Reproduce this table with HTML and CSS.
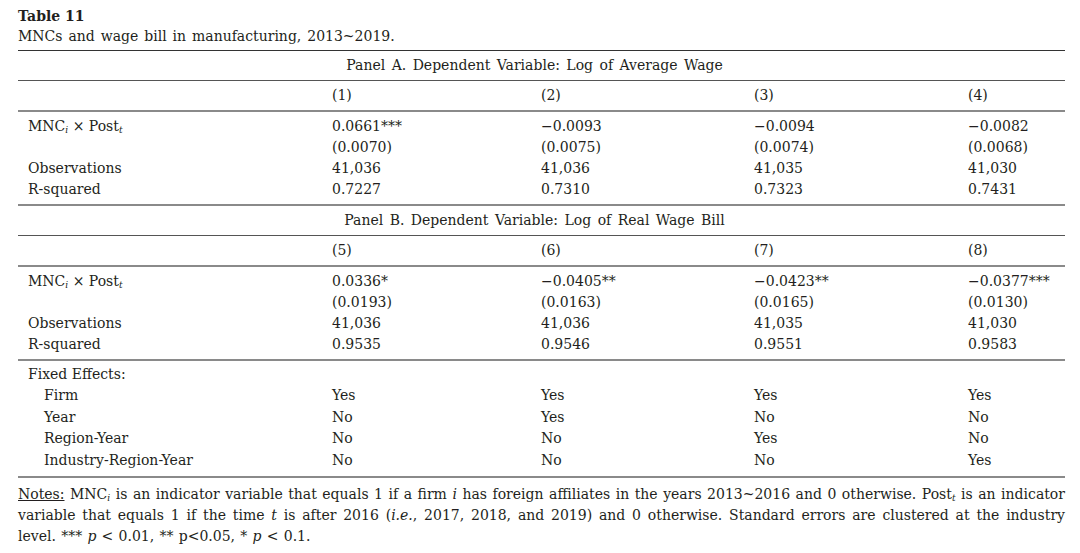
FILE: index.html
```html
<!DOCTYPE html>
<html lang="en">
<head>
<meta charset="utf-8">
<title>Table 11</title>
<link rel="stylesheet" href="styles.css">
</head>
<body>
<div class="page">
  <div class="title">Table 11</div>
  <div class="caption">MNCs and wage bill in manufacturing, 2013~2019.</div>
  <table class="tbl">
    <colgroup>
      <col class="c-label"><col class="c1"><col class="c2"><col class="c3"><col class="c4">
    </colgroup>
    <tbody>
      <tr class="panel first"><td colspan="5">Panel A. Dependent Variable: Log of Average Wage</td></tr>
      <tr class="colhead"><td></td><td>(1)</td><td>(2)</td><td>(3)</td><td>(4)</td></tr>
      <tr class="data top"><td class="lab">MNC<span class="sb">i</span> × Post<span class="sb">t</span></td><td>0.0661***</td><td>−0.0093</td><td>−0.0094</td><td>−0.0082</td></tr>
      <tr class="data"><td class="lab"></td><td>(0.0070)</td><td>(0.0075)</td><td>(0.0074)</td><td>(0.0068)</td></tr>
      <tr class="data"><td class="lab">Observations</td><td>41,036</td><td>41,036</td><td>41,035</td><td>41,030</td></tr>
      <tr class="data bottom"><td class="lab">R-squared</td><td>0.7227</td><td>0.7310</td><td>0.7323</td><td>0.7431</td></tr>
      <tr class="panel"><td colspan="5">Panel B. Dependent Variable: Log of Real Wage Bill</td></tr>
      <tr class="colhead"><td></td><td>(5)</td><td>(6)</td><td>(7)</td><td>(8)</td></tr>
      <tr class="data top"><td class="lab">MNC<span class="sb">i</span> × Post<span class="sb">t</span></td><td>0.0336*</td><td>−0.0405**</td><td>−0.0423**</td><td>−0.0377***</td></tr>
      <tr class="data"><td class="lab"></td><td>(0.0193)</td><td>(0.0163)</td><td>(0.0165)</td><td>(0.0130)</td></tr>
      <tr class="data"><td class="lab">Observations</td><td>41,036</td><td>41,036</td><td>41,035</td><td>41,030</td></tr>
      <tr class="data bottom"><td class="lab">R-squared</td><td>0.9535</td><td>0.9546</td><td>0.9551</td><td>0.9583</td></tr>
      <tr class="data top sep"><td class="lab">Fixed Effects:</td><td></td><td></td><td></td><td></td></tr>
      <tr class="data fe"><td class="lab sub">Firm</td><td>Yes</td><td>Yes</td><td>Yes</td><td>Yes</td></tr>
      <tr class="data fe"><td class="lab sub">Year</td><td>No</td><td>Yes</td><td>No</td><td>No</td></tr>
      <tr class="data fe"><td class="lab sub">Region-Year</td><td>No</td><td>No</td><td>Yes</td><td>No</td></tr>
      <tr class="data fe bottom last"><td class="lab sub">Industry-Region-Year</td><td>No</td><td>No</td><td>No</td><td>Yes</td></tr>
    </tbody>
  </table>
  <p class="notes"><span class="u">Notes:</span> MNC<span class="sb">i</span> is an indicator variable that equals 1 if a firm <i>i</i> has foreign affiliates in the years 2013~2016 and 0 otherwise. Post<span class="sb">t</span> is an indicator variable that equals 1 if the time <i>t</i> is after 2016 (<i>i.e.</i>, 2017, 2018, and 2019) and 0 otherwise. Standard errors are clustered at the industry level. *** <i>p</i> &lt; 0.01, ** p&lt;0.05, * <i>p</i> &lt; 0.1.</p>
</div>
</body>
</html>
```
FILE: styles.css
```css
html, body {
  margin: 0;
  padding: 0;
  background: #ffffff;
}
body {
  font-family: "DejaVu Serif", "Liberation Serif", serif;
  font-size: 14px;
  color: #231f20;
}
.page {
  width: 1047px;
  padding: 6px 15px 0 18px;
}
.title {
  font-weight: bold;
  font-size: 14px;
  line-height: 20px;
}
.caption {
  line-height: 21px;
  margin-bottom: 3px;
  word-spacing: 1.5px;
}
.tbl {
  width: 1047px;
  border-collapse: collapse;
  table-layout: fixed;
}
.c-label { width: 314px; }
.c1 { width: 209px; }
.c2 { width: 213px; }
.c3 { width: 214px; }
.c4 { width: 97px; }
.tbl td {
  padding: 0;
  line-height: 21px;
  vertical-align: middle;
  white-space: nowrap;
}
.panel td {
  height: 29px;
  text-align: center;
  padding-right: 14px;
  word-spacing: 2px;
  border-top: 1.5px solid #555;
  border-bottom: 1.5px solid #555;
}
.panel.first td {
  border-top: 1.5px solid #333;
}
.colhead td {
  height: 29px;
  border-bottom: 2px solid #8a8a8a;
}
.data.top td { padding-top: 4px; }
.data.bottom td { padding-bottom: 4px; }
.data.bottom + .panel td { border-top: 2px solid #8a8a8a; }
.data.sep td { border-top: 2px solid #8a8a8a; padding-top: 3px; }
.data.fe td { line-height: 21.5px; }
.data.last td { border-bottom: 2px solid #8a8a8a; padding-bottom: 5px; }
.lab { padding-left: 10px !important; }
.lab.sub { padding-left: 26px !important; }
.sb {
  font-size: 9px;
  font-style: italic;
  line-height: 0;
  position: relative;
  top: 2px;
}
.notes {
  margin: 6px 0 0 0;
  line-height: 21px;
  text-align: justify;
  word-spacing: 0.8px;
}
.u {
  text-decoration: underline;
}
```
